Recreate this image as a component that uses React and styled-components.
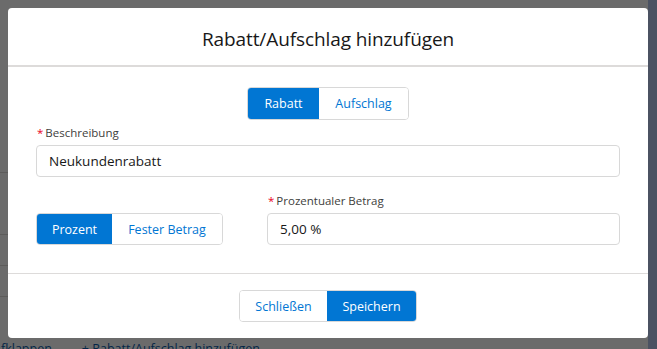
import React, { useState } from 'react';
import styled, { createGlobalStyle } from 'styled-components';

// Global

const GlobalStyle = createGlobalStyle`
  html, body {
    margin: 0;
    padding: 0;
    width: 657px;
    height: 349px;
    overflow: hidden;
  }
  body {
    font-family: "Open Sans", "Noto Sans", sans-serif;
    color: #181818;
  }
`

// Page behind the dialog

const Page = styled.div`
  position: relative;
  width: 657px;
  height: 349px;
  display: flex;
  background: #fff;
`

const PageMain = styled.div`
  flex: 1;
  display: flex;
  flex-direction: column;
  padding-top: 172px;
`

const PageRule = styled.div`
  height: ${props => props.gap}px;
  border-top: 1px solid #dddbda;
`

const PageLinks = styled.div`
  display: flex;
  gap: 30px;
  margin-top: auto;
  padding-left: 1px;
  font-size: 12.5px;
  line-height: 14px;
  height: 7px;
  color: #0b5cab;
  white-space: nowrap;
`

const PageStrip = styled.div`
  width: 9px;
  background: #b4c3ea;
`

const Backdrop = styled.div`
  position: absolute;
  inset: 0;
  background: rgba(0, 0, 0, 0.58);
`

// Dialog

const Modal = styled.div`
  position: absolute;
  left: 8px;
  top: 8px;
  width: 640px;
  height: 330px;
  background: #fff;
  border-radius: 4px;
  display: flex;
  flex-direction: column;
  overflow: hidden;
`

const Header = styled.header`
  height: 57px;
  display: flex;
  align-items: center;
  justify-content: center;
  border-bottom: 2px solid #dddbda;
`

const Title = styled.h2`
  margin: 0;
  font-weight: 400;
  font-size: 19px;
  letter-spacing: -0.1px;
  padding-top: 4px;
`

const Body = styled.div`
  flex: 1;
  padding: 20px 28px 0;
  display: flex;
  flex-direction: column;
`

const CenterRow = styled.div`
  display: flex;
  justify-content: center;
`

const ButtonGroup = styled.div`
  display: inline-flex;
  justify-self: start;
  height: ${props => props.h || 33}px;
  border: 1px solid #d8d8d8;
  border-radius: 4px;
  overflow: hidden;
  box-sizing: border-box;
`

const Segment = styled.button`
  font-family: inherit;
  font-size: 12.5px;
  border: 0;
  padding: 0;
  width: ${props => props.w}px;
  background: ${props => (props.active ? '#0176d3' : '#fff')};
  color: ${props => (props.active ? '#fff' : '#0176d3')};
  cursor: pointer;
`

const Field = styled.div`
  display: flex;
  flex-direction: column;
  margin-top: ${props => props.top || 0}px;
`

const Label = styled.label`
  font-size: 11.5px;
  color: #3e3e3c;
  line-height: 14px;
  margin-bottom: 5px;
  padding-left: 1px;

  abbr {
    color: #ea001e;
    text-decoration: none;
    margin-right: 2px;
  }
`

const Input = styled.input`
  font-family: inherit;
  font-size: 13.5px;
  color: #181818;
  height: 32px;
  box-sizing: border-box;
  border: 1px solid #d8d8d8;
  border-radius: 4px;
  padding: 0 12px;
  outline: none;
`

const Grid = styled.div`
  display: grid;
  grid-template-columns: 207px 1fr;
  column-gap: 24px;
  align-items: end;
  margin-top: 17px;
`

const Footer = styled.footer`
  border-top: 1px solid #dddbda;
  padding: 16px 0;
  display: flex;
  justify-content: center;
`

// App

export default function App() {
  const [kind, setKind] = useState('rabatt');
  const [mode, setMode] = useState('prozent');

  return (
    <>
      <GlobalStyle />
      <Page>
        <PageMain>
          <PageRule gap={61} />
          <PageRule gap={30} />
          <PageRule gap={30} />
          <PageRule gap={0} />
          <PageLinks>
            <span>fklappen</span>
            <span>+ Rabatt/Aufschlag hinzufügen</span>
          </PageLinks>
        </PageMain>
        <PageStrip />
        <Backdrop />
        <Modal role="dialog">
          <Header>
            <Title>Rabatt/Aufschlag hinzufügen</Title>
          </Header>
          <Body>
            <CenterRow>
              <ButtonGroup>
                <Segment w={71} active={kind === 'rabatt'} onClick={() => setKind('rabatt')}>Rabatt</Segment>
                <Segment w={89} active={kind === 'aufschlag'} onClick={() => setKind('aufschlag')}>Aufschlag</Segment>
              </ButtonGroup>
            </CenterRow>
            <Field top={6}>
              <Label><abbr>*</abbr>Beschreibung</Label>
              <Input defaultValue="Neukundenrabatt" />
            </Field>
            <Grid>
              <ButtonGroup h={32}>
                <Segment w={75} active={mode === 'prozent'} onClick={() => setMode('prozent')}>Prozent</Segment>
                <Segment w={110} active={mode === 'fest'} onClick={() => setMode('fest')}>Fester Betrag</Segment>
              </ButtonGroup>
              <Field>
                <Label><abbr>*</abbr>Prozentualer Betrag</Label>
                <Input defaultValue="5,00 %" />
              </Field>
            </Grid>
          </Body>
          <Footer>
            <ButtonGroup h={32}>
              <Segment w={87}>Schließen</Segment>
              <Segment w={89} active>Speichern</Segment>
            </ButtonGroup>
          </Footer>
        </Modal>
      </Page>
    </>
  );
}
